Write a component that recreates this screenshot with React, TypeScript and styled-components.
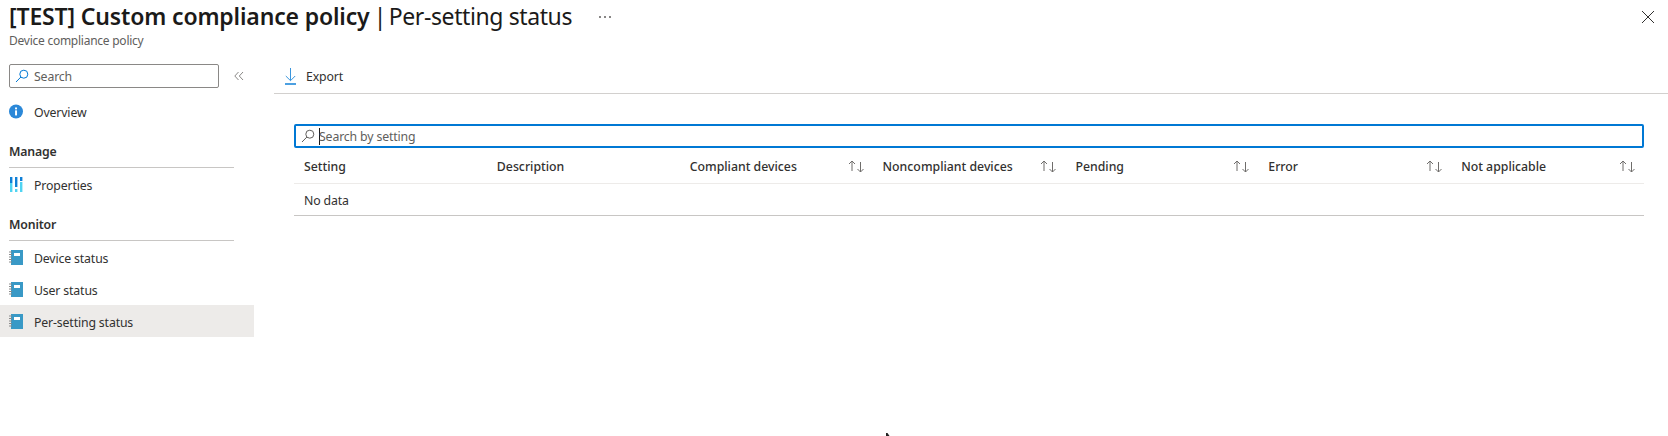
import React from "react";
import styled, { createGlobalStyle } from "styled-components";

const Global = createGlobalStyle`
  html, body { margin: 0; padding: 0; background: #fff; overflow: hidden; }
  body { font-family: "Noto Sans", "Open Sans", sans-serif; color: #323130; }
  * { box-sizing: border-box; }
`;

const Page = styled.div`
  position: relative;
  width: 1668px;
  height: 436px;
  overflow: hidden;
`;

const Header = styled.header`
  height: 56px;
  padding: 0 0 0 9px;
  display: flex;
  justify-content: space-between;
`;

const TitleBlock = styled.div`
  display: flex;
  flex-direction: column;
`;

const TitleRow = styled.div`
  display: flex;
  align-items: center;
  height: 33px;
`;

const Title = styled.h1`
  margin: 0;
  font-size: 23px;
  line-height: 33px;
  font-weight: 400;
  color: #1b1a19;
  white-space: nowrap;
`;

const TitleStrong = styled.span`
  font-weight: 600;
  letter-spacing: -0.15px;
`;

const TitleSeparator = styled.span`
  letter-spacing: -1.8px;
`;

const TitleLight = styled.span`
  letter-spacing: -0.4px;
`;

const More = styled.span`
  margin-left: 27px;
  display: flex;
  gap: 3px;
  i { width: 2px; height: 2px; background: #605e5c; display: block; border-radius: 50%; }
`;

const Subtitle = styled.div`
  font-size: 12px;
  line-height: 16px;
  color: #605e5c;
  letter-spacing: -0.25px;
`;

const CloseBtn = styled.button`
  border: 0;
  background: none;
  padding: 0;
  width: 12px;
  height: 12px;
  margin: 11px 14px 0 0;
  display: flex;
`;

const Body = styled.div`
  display: flex;
`;

const Sidebar = styled.aside`
  width: 254px;
  flex: none;
`;

const SideSearchRow = styled.div`
  display: flex;
  align-items: center;
  padding: 8px 0 0 9px;
`;

const SideSearch = styled.label`
  width: 210px;
  height: 24px;
  border: 1px solid #8a8886;
  border-radius: 2px;
  display: flex;
  align-items: center;
  padding-left: 5px;
  gap: 5px;
`;

const SearchInput = styled.input`
  border: 0;
  outline: 0;
  flex: 1;
  min-width: 0;
  padding: 0;
  background: transparent;
  font: 400 12.3px "Noto Sans", sans-serif;
  letter-spacing: -0.15px;
  &::placeholder { color: #605e5c; opacity: 1; }
`;

const Collapse = styled.span`
  margin-left: 15px;
  display: flex;
`;

const NavList = styled.nav`
  margin-top: 7px;
`;

const NavItem = styled.div<{ $active?: boolean }>`
  height: 32px;
  display: flex;
  align-items: center;
  padding: 3px 0 0 9px;
  gap: 11px;
  font-size: 12.3px;
  letter-spacing: -0.15px;
  color: #323130;
  background: ${(p) => (p.$active ? "#edebe9" : "transparent")};
`;

const IconSlot = styled.span`
  width: 14px;
  height: 16px;
  margin-top: -2px;
  display: flex;
  align-items: center;
  justify-content: center;
  flex: none;
`;

const NavGroup = styled.section`
  margin-top: 9px;
`;

const NavGroupTitle = styled.div`
  margin: 0 20px 0 9px;
  height: 32px;
  padding-top: 6px;
  line-height: 20px;
  border-bottom: 1px solid #c8c6c4;
  font-size: 12.3px;
  font-weight: 600;
  letter-spacing: -0.15px;
  color: #323130;
`;

const Main = styled.main`
  flex: 1;
  min-width: 0;
`;

const Toolbar = styled.div`
  margin-left: 20px;
  height: 38px;
  border-bottom: 1px solid #d2d0ce;
  display: flex;
  align-items: center;
  padding: 3px 0 0 11px;
  gap: 10px;
  font-size: 12.3px;
  letter-spacing: -0.15px;
`;

const TableArea = styled.section`
  margin: 30px 0 0 40px;
  width: 1350px;
`;

const FilterBox = styled.label`
  height: 24px;
  border: 2px solid #0078d4;
  border-radius: 2px;
  display: flex;
  align-items: center;
  padding-left: 5px;
  gap: 4px;
`;

const Caret = styled.span`
  width: 1px;
  height: 17px;
  background: #1b1a19;
  margin-right: -5px;
  flex: none;
`;

const Row = styled.div<{ $h: number; $line: string }>`
  display: grid;
  grid-template-columns: repeat(7, 1fr);
  height: ${(p) => p.$h}px;
  border-bottom: 1px solid ${(p) => p.$line};
  align-items: center;
`;

const HeadCell = styled.div`
  display: flex;
  align-items: center;
  justify-content: space-between;
  padding: 2px 8px 0 10px;
  font-size: 12.3px;
  font-weight: 500;
  letter-spacing: 0;
  color: #323130;
  white-space: nowrap;
`;

const DataCell = styled.div`
  grid-column: 1 / -1;
  padding: 2px 0 0 10px;
  font-size: 12.3px;
  letter-spacing: -0.15px;
`;

const Pointer = styled.svg`
  position: absolute;
  left: 886px;
  top: 433px;
`;

const Glass = ({ color = "#0078d4" }: { color?: string }) => (
  <svg width="14" height="14" viewBox="0 0 14 14" fill="none" stroke={color} strokeWidth="1">
    <circle cx="8.8" cy="5.2" r="4" />
    <path d="M5.9 8 1 13" />
  </svg>
);

const Info = () => (
  <svg width="15" height="15" viewBox="0 0 15 15">
    <circle cx="7.5" cy="7.5" r="7.5" fill="#2b88d8" />
    <rect x="6.5" y="6.3" width="2.1" height="5.4" fill="#fff" />
    <rect x="6.5" y="3.2" width="2.1" height="2" fill="#fff" />
  </svg>
);

const Props = () => (
  <svg width="14" height="16" viewBox="0 0 14 16">
    <rect x="1" y="0" width="2.4" height="6" fill="#0f7fd6" />
    <rect x="1" y="6" width="2.4" height="9" fill="#50d4f2" />
    <rect x="6" y="0" width="2.4" height="10" fill="#0f7fd6" />
    <rect x="6" y="12" width="2.4" height="3" fill="#50d4f2" />
    <rect x="11" y="0" width="2.4" height="4" fill="#0f7fd6" />
    <rect x="11" y="5" width="2.4" height="10" fill="#50d4f2" />
  </svg>
);

const Book = () => (
  <svg width="14" height="15" viewBox="0 0 14 15">
    <rect x="2" y="0" width="12" height="15" fill="#3999c6" />
    <rect x="5" y="3" width="6" height="3" fill="#fff" />
    <path d="M0 2h3M0 4.5h3M0 7h3M0 9.5h3M0 12h3" stroke="#8a8a8a" strokeWidth="1" />
  </svg>
);

const Sort = () => (
  <svg width="17" height="13" viewBox="0 0 17 13" fill="none" stroke="#6f6d6b" strokeWidth="1">
    <path d="M4 11V1M1 4l3-3 3 3" />
    <path d="M12.5 2v10M9.5 9l3 3 3-3" />
  </svg>
);

const Download = () => (
  <svg width="11" height="17" viewBox="0 0 11 17" fill="none" strokeWidth="1">
    <path d="M5.5 0v12.5M.8 8l4.7 4.7L10.2 8" stroke="#3a96dd" />
    <path d="M0 16h11" stroke="#0078d4" strokeWidth="1.4" />
  </svg>
);

const columns = ["Setting", "Description", "Compliant devices", "Noncompliant devices", "Pending", "Error", "Not applicable"];
const sortable = new Set(["Compliant devices", "Noncompliant devices", "Pending", "Error", "Not applicable"]);

export default function App() {
  return (
    <Page>
      <Global />
      <Header>
        <TitleBlock>
          <TitleRow>
            <Title>
              <TitleStrong>[TEST] Custom compliance policy</TitleStrong>
              <TitleSeparator> | </TitleSeparator>
              <TitleLight>Per-setting status</TitleLight>
            </Title>
            <More><i /><i /><i /></More>
          </TitleRow>
          <Subtitle>Device compliance policy</Subtitle>
        </TitleBlock>
        <CloseBtn aria-label="Close">
          <svg width="12" height="12" viewBox="0 0 12 12" stroke="#323130" strokeWidth="1">
            <path d="M0 0l12 12M12 0L0 12" />
          </svg>
        </CloseBtn>
      </Header>
      <Body>
        <Sidebar>
          <SideSearchRow>
            <SideSearch>
              <Glass />
              <SearchInput placeholder="Search" readOnly />
            </SideSearch>
            <Collapse>
              <svg width="10" height="10" viewBox="0 0 10 10" fill="none" stroke="#8a8886" strokeWidth="1">
                <path d="M4.5 1 .8 5l3.7 4M9 1 5.3 5 9 9" />
              </svg>
            </Collapse>
          </SideSearchRow>
          <NavList>
            <NavItem><IconSlot><Info /></IconSlot>Overview</NavItem>
            <NavGroup>
              <NavGroupTitle>Manage</NavGroupTitle>
              <NavItem><IconSlot><Props /></IconSlot>Properties</NavItem>
            </NavGroup>
            <NavGroup>
              <NavGroupTitle>Monitor</NavGroupTitle>
              <NavItem><IconSlot><Book /></IconSlot>Device status</NavItem>
              <NavItem><IconSlot><Book /></IconSlot>User status</NavItem>
              <NavItem $active><IconSlot><Book /></IconSlot>Per-setting status</NavItem>
            </NavGroup>
          </NavList>
        </Sidebar>
        <Main>
          <Toolbar>
            <Download />
            Export
          </Toolbar>
          <TableArea>
            <FilterBox>
              <Glass color="#605e5c" />
              <Caret />
              <SearchInput placeholder="Search by setting" readOnly />
            </FilterBox>
            <Row $h={36} $line="#edebe9">
              {columns.map((c) => (
                <HeadCell key={c}>
                  <span>{c}</span>
                  {sortable.has(c) && <Sort />}
                </HeadCell>
              ))}
            </Row>
            <Row $h={32} $line="#c8c6c4">
              <DataCell>No data</DataCell>
            </Row>
          </TableArea>
        </Main>
      </Body>
      <Pointer width="4" height="3" viewBox="0 0 4 3"><path d="M0 0h1.5l2 3H0z" fill="#222" /></Pointer>
    </Page>
  );
}
